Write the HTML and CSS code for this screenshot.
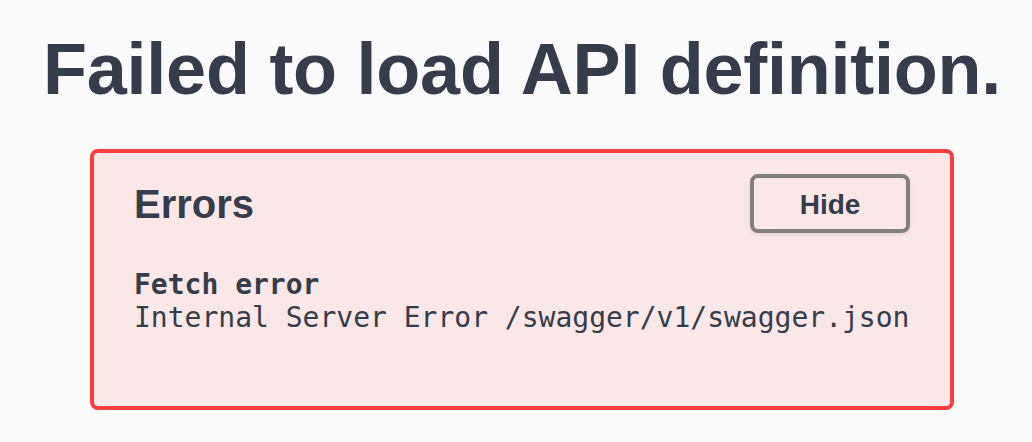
FILE: index.html
```html
<!DOCTYPE html>
<html lang="en">
<head>
<meta charset="utf-8">
<title>Swagger UI</title>
<link rel="stylesheet" href="styles.css">
</head>
<body>
<div class="page">
  <h1 class="title">Failed to load API definition.</h1>
  <div class="errors">
    <div class="errors-header">
      <h4 class="errors-title">Errors</h4>
      <button class="btn-hide" type="button">Hide</button>
    </div>
    <div class="error">
      <div class="error-head">Fetch error</div>
      <div class="error-msg">Internal Server Error /swagger/v1/swagger.json</div>
    </div>
  </div>
</div>
</body>
</html>
```

FILE: styles.css
```css
html, body {
  margin: 0;
  padding: 0;
  background: #fafafa;
}
body {
  font-family: "Liberation Sans", Arial, sans-serif;
  color: #363c49;
}
.page {
  padding: 28px 0 0 12px;
  display: flex;
  flex-direction: column;
  align-items: center;
}
.title {
  margin: 0;
  font-size: 72px;
  font-weight: 700;
  line-height: normal;
  letter-spacing: -0.25px;
  color: #363c49;
  white-space: nowrap;
}
.errors {
  box-sizing: border-box;
  width: 864px;
  margin-top: 39px;
  padding: 21px 40px 20px;
  border: 4px solid #f93e3e;
  border-radius: 8px;
  background: #fae7e7;
}
.errors-header {
  display: flex;
  align-items: center;
  justify-content: space-between;
}
.errors-title {
  margin: 0;
  font-size: 40px;
  font-weight: 700;
  line-height: 1;
  color: #363c49;
}
.btn-hide {
  box-sizing: border-box;
  height: 59px;
  width: 160px;
  padding: 2px 0 0;
  border: 4px solid #808080;
  border-radius: 8px;
  background: transparent;
  font-family: "Liberation Sans", Arial, sans-serif;
  font-size: 28px;
  font-weight: 700;
  color: #363c49;
  box-shadow: 0 2px 4px rgba(0,0,0,0.08);
}
.error {
  margin-top: 35px;
  margin-bottom: 52px;
  font-family: "DejaVu Sans Mono", Menlo, monospace;
  font-size: 28px;
  line-height: 33px;
  color: #363c49;
}
.error-head {
  font-weight: 700;
}
```
